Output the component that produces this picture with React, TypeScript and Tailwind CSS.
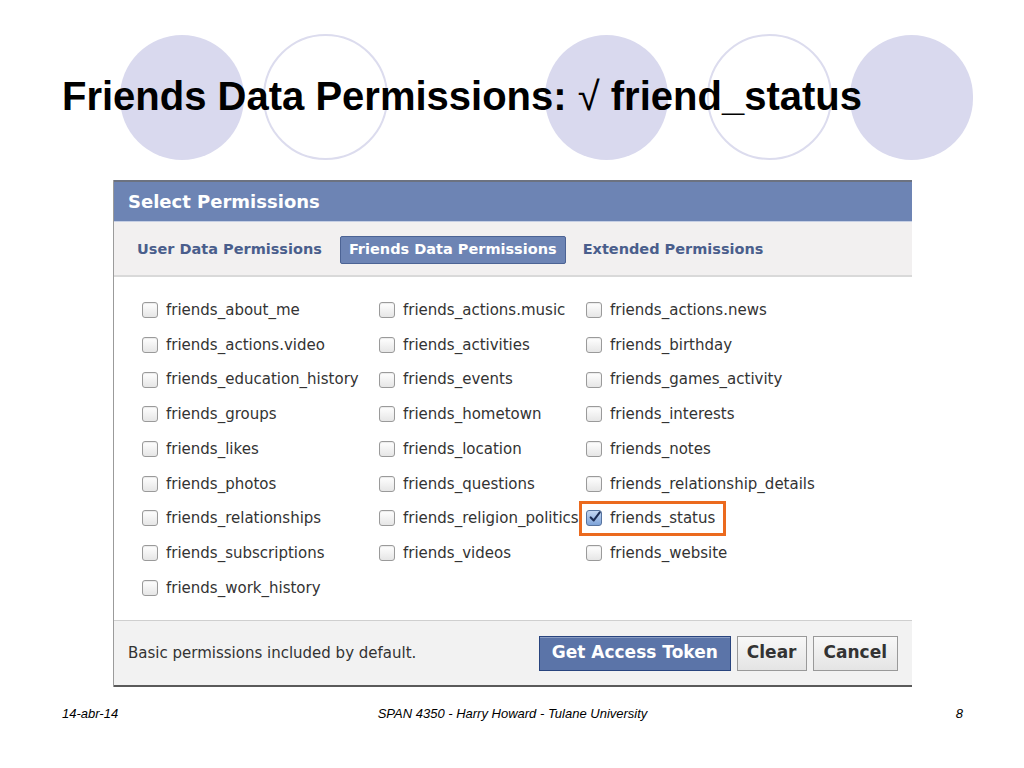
import React from 'react';

const columns: string[][] = [
  [
    'friends_about_me',
    'friends_actions.video',
    'friends_education_history',
    'friends_groups',
    'friends_likes',
    'friends_photos',
    'friends_relationships',
    'friends_subscriptions',
    'friends_work_history',
  ],
  [
    'friends_actions.music',
    'friends_activities',
    'friends_events',
    'friends_hometown',
    'friends_location',
    'friends_questions',
    'friends_religion_politics',
    'friends_videos',
  ],
  [
    'friends_actions.news',
    'friends_birthday',
    'friends_games_activity',
    'friends_interests',
    'friends_notes',
    'friends_relationship_details',
    'friends_status',
    'friends_website',
  ],
];

function Checkbox({ checked }: { checked?: boolean }) {
  if (checked) {
    return (
      <span className="flex h-[16px] w-[16px] shrink-0 items-center justify-center rounded-[3px] border border-[#56739f] bg-gradient-to-b from-[#c3d6f2] to-[#7ea3d8]">
        <svg width="14" height="14" viewBox="0 0 14 14" className="-mt-[3px] ml-[2px]">
          <path d="M2 7.5 L5.5 11 L12.5 1.5" fill="none" stroke="#1c2d55" strokeWidth="2.4" strokeLinecap="round" strokeLinejoin="round" />
        </svg>
      </span>
    );
  }
  return (
    <span className="h-[16px] w-[16px] shrink-0 rounded-[3px] border border-[#9a9a9a] bg-gradient-to-b from-white to-[#e6e6e6] shadow-[inset_0_1px_1px_rgba(0,0,0,0.08)]" />
  );
}

function Item({ label, checked }: { label: string; checked?: boolean }) {
  return (
    <div className="relative flex h-[34.7px] items-center gap-[8px] whitespace-nowrap">
      <Checkbox checked={checked} />
      <span className="text-[15px] text-[#333]">{label}</span>
      {checked && (
        <span className="absolute left-[-7px] top-[0px] h-[35px] w-[147px] border-[3px] border-[#eb6a1e]" />
      )}
    </div>
  );
}

export default function App() {
  return (
    <div className="relative h-[768px] w-[1024px] overflow-hidden bg-white font-['Liberation_Sans',Arial,sans-serif]">
      {/* decorative circles */}
      <div className="absolute left-[120px] top-[35px] h-[125px] w-[124px] rounded-full bg-[#d9d9ee]" />
      <div className="absolute left-[263px] top-[34px] h-[126px] w-[125px] rounded-full border-2 border-[#dcdcee]" />
      <div className="absolute left-[545px] top-[35px] h-[125px] w-[123px] rounded-full bg-[#d9d9ee]" />
      <div className="absolute left-[707px] top-[34px] h-[126px] w-[125px] rounded-full border-2 border-[#dcdcee]" />
      <div className="absolute left-[850px] top-[35px] h-[125px] w-[123px] rounded-full bg-[#d9d9ee]" />

      <div className="relative flex flex-col">
        <h1 className="pl-[62px] pt-[74px] text-[40px] font-bold leading-[44px] text-black">
          Friends Data Permissions: <span className="font-normal">√</span> friend_status
        </h1>

        <div className="ml-[113px] mt-[62px] w-[799px] border-l border-[#9b9b9b] font-['DejaVu_Sans',sans-serif]">
          <div className="flex h-[41px] items-center border-t-2 border-[#6c7280] bg-[#6d84b4] pl-[14px] text-[18px] font-bold text-white">
            Select Permissions
          </div>
          <div className="flex h-[56px] items-center border-t border-b-2 border-t-[#c6cfe4] border-b-[#d9d9d9] bg-[#f2f0f0] pl-[14px] pt-[3px] text-[14.5px] font-bold">
            <span className="px-[9px] text-[#4a5e8c]">User Data Permissions</span>
            <span className="ml-[9px] rounded-[2px] border border-[#4c6394] bg-[#6d84b4] px-[8px] py-[2px] text-white">
              Friends Data Permissions
            </span>
            <span className="ml-[8px] px-[9px] text-[#4a5e8c]">Extended Permissions</span>
          </div>
          <div className="grid grid-cols-[237px_207px_1fr] bg-white pb-[15px] pl-[28px] pt-[16px]">
            {columns.map((col, ci) => (
              <div key={ci} className="flex flex-col">
                {col.map((label) => (
                  <Item key={label} label={label} checked={label === 'friends_status'} />
                ))}
              </div>
            ))}
          </div>
          <div className="flex h-[67px] items-center justify-between border-t border-b-2 border-t-[#cfcfcf] border-b-[#5a5a5a] bg-[#f2f2f2] pl-[14px] pr-[14px]">
            <span className="text-[15px] text-[#333]">Basic permissions included by default.</span>
            <div className="flex items-center gap-[6px] text-[17px] font-bold">
              <button className="h-[35px] border border-[#29447e] bg-[#5b74a8] px-[12px] text-white shadow-[inset_0_1px_0_#8a9cc2]">
                Get Access Token
              </button>
              <button className="h-[35px] border border-[#999] bg-gradient-to-b from-[#f8f8f8] to-[#e4e4e4] px-[9px] text-[#333]">
                Clear
              </button>
              <button className="h-[35px] border border-[#999] bg-gradient-to-b from-[#f8f8f8] to-[#e4e4e4] px-[10px] text-[#333]">
                Cancel
              </button>
            </div>
          </div>
        </div>

        <div className="mt-[17px] grid grid-cols-[1fr_auto_1fr] items-center pl-[62px] pr-[61px] text-[13px] italic text-black">
          <span>14-abr-14</span>
          <span>SPAN 4350 - Harry Howard - Tulane University</span>
          <span className="text-right">8</span>
        </div>
      </div>
    </div>
  );
}
